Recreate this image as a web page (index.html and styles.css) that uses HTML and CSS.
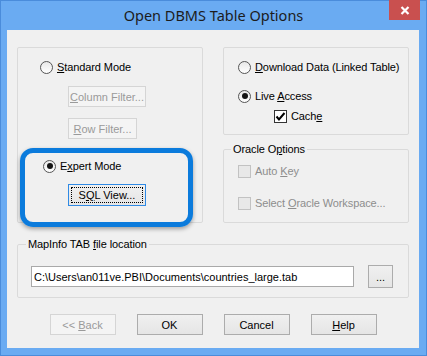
FILE: index.html
```html
<!DOCTYPE html>
<html lang="en">
<head>
    <meta charset="UTF-8">
    <title>Open DBMS Table Options</title>
    <link rel="stylesheet" href="styles.css">
</head>
<body>
    <div class="window">
        <div class="titlebar">
            <span class="title">Open DBMS Table Options</span>
            <span class="close">
                <svg width="10" height="9" viewBox="0 0 10 9"><path d="M1.5 1 L8.5 8 M8.5 1 L1.5 8" stroke="#fff" stroke-width="2.2" fill="none"/></svg>
            </span>
        </div>
        <div class="client">
            <div class="top">
                <fieldset class="group mode-group">
                    <div class="option standard">
                        <span class="radio"></span><span><u>S</u>tandard Mode</span>
                    </div>
                    <button class="btn filter-btn col-filter" disabled><u>C</u>olumn Filter...</button>
                    <button class="btn filter-btn row-filter" disabled><u>R</u>ow Filter...</button>
                    <div class="highlight">
                        <div class="option">
                            <span class="radio checked"></span><span>E<u>x</u>pert Mode</span>
                        </div>
                        <button class="btn sql-btn"><span class="focus">S<u>Q</u>L View...</span></button>
                    </div>
                </fieldset>
                <div class="right-col">
                    <fieldset class="group access-group">
                        <div class="option">
                            <span class="radio"></span><span><u>D</u>ownload Data (Linked Table)</span>
                        </div>
                        <div class="option live">
                            <span class="radio checked"></span><span>Live <u>A</u>ccess</span>
                        </div>
                        <div class="option cache">
                            <span class="check">
                                <svg width="11" height="11" viewBox="0 0 11 11"><path d="M1.5 5.5 L4 8.5 L9.5 2" stroke="#000" stroke-width="2" fill="none"/></svg>
                            </span><span>Cach<u>e</u></span>
                        </div>
                    </fieldset>
                    <fieldset class="group oracle-group">
                        <legend>Oracle O<u>p</u>tions</legend>
                        <div class="option disabled">
                            <span class="check off"></span><span>Auto <u>K</u>ey</span>
                        </div>
                        <div class="option disabled workspace">
                            <span class="check off"></span><span>Select <u>O</u>racle Workspace...</span>
                        </div>
                    </fieldset>
                </div>
            </div>
            <fieldset class="group file-group">
                <legend>MapInfo TAB <u>f</u>ile location</legend>
                <div class="file-row">
                    <input class="path" type="text" value="C:\Users\an011ve.PBI\Documents\countries_large.tab">
                    <button class="btn browse">...</button>
                </div>
            </fieldset>
            <div class="actions">
                <button class="btn" disabled>&lt;&lt; <u>B</u>ack</button>
                <button class="btn">OK</button>
                <button class="btn">Cancel</button>
                <button class="btn"><u>H</u>elp</button>
            </div>
        </div>
    </div>
</body>
</html>
```

FILE: styles.css
```css
body {
    margin: 0;
    font-family: "Liberation Sans", Arial, sans-serif;
    font-size: 11px;
    letter-spacing: -0.1px;
    color: #000;
}
.window {
    width: 427px;
    height: 356px;
    box-sizing: border-box;
    background: #6aabf2;
    border: 1px solid #4a8cdb;
    padding: 0 7px 7px 6px;
    display: flex;
    flex-direction: column;
}
.titlebar {
    height: 29px;
    display: grid;
    grid-template-columns: 1fr auto 1fr;
}
.title {
    grid-column: 2;
    font-family: "Noto Sans", "Open Sans", sans-serif;
    font-size: 14.5px;
    letter-spacing: 0;
    color: #1c1c1c;
    line-height: 29px;
    padding-left: 1px;
}
.close {
    grid-column: 3;
    justify-self: end;
    width: 31px;
    height: 20px;
    margin-top: -1px;
    margin-right: -1px;
    background: #c9504f;
    display: flex;
    align-items: center;
    justify-content: center;
}
.client {
    flex: 1;
    background: #f0f0f0;
    padding: 17px 10px 0 10px;
}
.top {
    display: grid;
    grid-template-columns: 186px 186px;
    column-gap: 20px;
}
.group {
    margin: 0;
    padding: 0;
    min-width: 0;
    border: 1px solid #dadada;
    border-radius: 2px;
}
.group legend {
    padding: 0 2px;
    line-height: 13px;
}
.option {
    display: flex;
    align-items: center;
    height: 14px;
    white-space: nowrap;
}
.option.disabled {
    color: #8d8d8d;
}
.radio {
    width: 13px;
    height: 13px;
    box-sizing: border-box;
    border: 1px solid #555;
    border-radius: 50%;
    background: linear-gradient(#e8e8e8, #fff);
    margin-right: 4px;
    display: flex;
    align-items: center;
    justify-content: center;
}
.radio.checked::after {
    content: "";
    width: 6px;
    height: 6px;
    border-radius: 50%;
    background: #141414;
}
.check {
    width: 13px;
    height: 13px;
    box-sizing: border-box;
    border: 1px solid #333;
    background: #fff;
    margin-right: 4px;
    display: flex;
    align-items: center;
    justify-content: center;
}
.check.off {
    border-color: #c2c2c2;
    background: #e8e8e8;
}
.btn {
    display: block;
    height: 21px;
    width: 66px;
    padding: 0;
    font: inherit;
    color: #000;
    border: 1px solid #acacac;
    border-radius: 0;
    background: linear-gradient(#f0f0f0, #e5e5e5);
}
.btn:disabled {
    color: #9a9a9a;
    border-color: #d5d5d5;
    background: #f4f4f4;
}

/* left group */
.mode-group {
    padding-top: 12px;
}
.standard {
    margin-left: 22px;
}
.filter-btn {
    margin-left: 50px;
}
.col-filter {
    margin-top: 12px;
    width: 78px;
}
.row-filter {
    margin-top: 11px;
    width: 69px;
}
.highlight {
    margin: 9px 0 -5px 2px;
    width: 173px;
    box-sizing: border-box;
    border: 5px solid #0b7bdc;
    border-radius: 13px;
    padding: 6px 0 16px 18px;
    box-shadow: 0 2px 4px rgba(0, 0, 0, 0.35);
}
.sql-btn {
    margin: 11px 0 0 25px;
    width: 78px;
    height: 22px;
    border-color: #2f8ae5;
    padding: 2px;
}
.sql-btn .focus {
    display: flex;
    align-items: center;
    justify-content: center;
    height: 100%;
    border: 1px dotted #000;
    box-sizing: border-box;
}

/* right column */
.right-col {
    display: flex;
    flex-direction: column;
}
.access-group {
    padding: 12px 0 11px 14px;
}
.live {
    margin-top: 15px;
}
.cache {
    margin: 6px 0 0 36px;
}
.oracle-group {
    flex: 1;
    margin-top: 8px;
    padding: 0 0 12px 14px;
}
.oracle-group legend {
    margin-left: -7px;
}
.oracle-group .option:first-of-type {
    margin-top: 8px;
}
.workspace {
    margin-top: 18px;
}

/* file location */
.file-group {
    margin-top: 15px;
    padding: 14px 0 9px 13px;
}
.file-group legend {
    margin-left: -5px;
}
.file-row {
    display: flex;
    align-items: center;
    gap: 14px;
}
.path {
    width: 323px;
    height: 21px;
    box-sizing: border-box;
    border: 1px solid #a9a9a9;
    padding: 0 2px;
    font: inherit;
    color: #000;
    background: #fff;
}
.browse {
    width: 25px;
    height: 23px;
}

.actions {
    display: flex;
    justify-content: center;
    gap: 21px;
    margin-top: 16px;
}
```
